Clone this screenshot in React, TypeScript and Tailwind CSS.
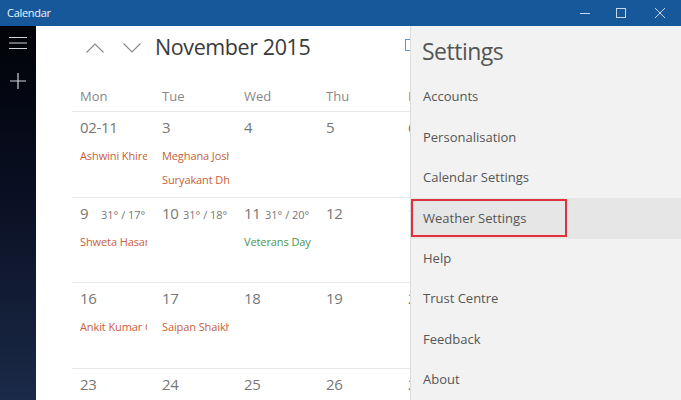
import React from "react";

const font = { fontFamily: '"Open Sans", "Noto Sans", sans-serif' };

type Ev = { t: string; c?: "o" | "g" };
type Cell = { d: string; w?: string; ev?: Ev[] };

const rows: Cell[][] = [
  [
    { d: "02-11", ev: [{ t: "Ashwini Khire-Kulkarni" }] },
    { d: "3", ev: [{ t: "Meghana Joshi" }, { t: "Suryakant Dhapte" }] },
    { d: "4" },
    { d: "5" },
    { d: "6" },
  ],
  [
    { d: "9", w: "31° / 17°", ev: [{ t: "Shweta Hasarmani" }] },
    { d: "10", w: "31° / 18°" },
    { d: "11", w: "31° / 20°", ev: [{ t: "Veterans Day", c: "g" }] },
    { d: "12" },
    { d: "13" },
  ],
  [
    { d: "16", ev: [{ t: "Ankit Kumar Gupta" }] },
    { d: "17", ev: [{ t: "Saipan Shaikh" }] },
    { d: "18" },
    { d: "19" },
    { d: "20" },
  ],
  [{ d: "23" }, { d: "24" }, { d: "25" }, { d: "26" }, { d: "27" }],
];

const settings = [
  "Accounts",
  "Personalisation",
  "Calendar Settings",
  "Weather Settings",
  "Help",
  "Trust Centre",
  "Feedback",
  "About",
];

export default function App() {
  return (
    <div className="w-[681px] h-[400px] overflow-hidden flex flex-col bg-white" style={font}>
      {/* Title bar */}
      <div className="h-[26px] shrink-0 bg-[#16589a] flex items-center text-white">
        <div className="pl-[7px] text-[11px] flex-1 tracking-[-0.3px] text-[#f2f6fa]">Calendar</div>
        <div className="flex items-center h-full">
          <div className="w-[36px] h-full flex items-center justify-center">
            <svg width="10" height="10" viewBox="0 0 10 10"><path d="M0 5.5h10" stroke="#c9d7e8" strokeWidth="1" /></svg>
          </div>
          <div className="w-[36px] h-full flex items-center justify-center">
            <svg width="10" height="10" viewBox="0 0 10 10"><rect x="0.5" y="0.5" width="9" height="9" fill="none" stroke="#c9d7e8" strokeWidth="1" /></svg>
          </div>
          <div className="w-[42px] h-full flex items-center justify-center">
            <svg width="10" height="10" viewBox="0 0 10 10"><path d="M0 0L10 10M10 0L0 10" stroke="#c9d7e8" strokeWidth="1" /></svg>
          </div>
        </div>
      </div>

      <div className="flex flex-1 min-h-0">
        {/* Sidebar */}
        <div className="w-[36px] shrink-0 bg-gradient-to-b from-[#020308] via-[#0b1226] to-[#1b2a48] flex flex-col items-center pt-[10px]">
          <svg width="18" height="14" viewBox="0 0 18 14">
            <path d="M0 1.5h18M0 7h18M0 12.5h18" stroke="#cfd3da" strokeWidth="1.2" />
          </svg>
          <svg className="mt-[23px]" width="16" height="16" viewBox="0 0 16 16">
            <path d="M8 0v16M0 8h16" stroke="#cfd3da" strokeWidth="1.2" />
          </svg>
        </div>

        {/* Main calendar */}
        <div className="w-[374px] shrink-0 overflow-hidden relative">
          <div className="h-[43px] flex items-center pl-[50px]">
            <svg width="18" height="10" viewBox="0 0 18 10">
              <path d="M0.5 9.5L9 1l8.5 8.5" fill="none" stroke="#888" strokeWidth="1.1" />
            </svg>
            <svg className="ml-[19px]" width="18" height="10" viewBox="0 0 18 10">
              <path d="M0.5 0.5L9 9l8.5-8.5" fill="none" stroke="#888" strokeWidth="1.1" />
            </svg>
            <div className="ml-[14px] text-[21.5px] text-[#3a3a3a] tracking-[-0.4px] whitespace-nowrap">November 2015</div>
            <div className="absolute left-[369px] top-[13px] w-[8px] h-[12px] border-l-[1.5px] border-t-[1.5px] border-b-[1.5px] border-[#5a94d0]" />
          </div>
          <div className="ml-[36px] w-[410px]">
            <div className="h-[42px] grid grid-cols-[82px_82px_82px_82px_82px] items-center text-[13px] text-[#888] pt-[14px]">
              {["Mon", "Tue", "Wed", "Thu", "Fri"].map((d) => (
                <div key={d} className="pl-[8px]">{d}</div>
              ))}
            </div>
            {rows.map((r, i) => (
              <div key={i} className="h-[85.5px] border-t border-[#e8e8e8] grid grid-cols-[82px_82px_82px_82px_82px]">
                {r.map((c, j) => (
                  <div key={j} className="pl-[8px] pr-[7px] pt-[4px] overflow-hidden">
                    <div className="flex items-baseline h-[24px] whitespace-nowrap">
                      <span className={`text-[15px] text-[#777] tracking-[-0.3px] ${c.w ? "w-[19px] shrink-0" : ""}`}>{c.d}</span>
                      {c.w && <span className="ml-[2px] text-[11px] text-[#777]">{c.w}</span>}
                    </div>
                    <div className="mt-[4px]">
                      {c.ev?.map((e, k) => (
                        <div
                          key={k}
                          className={`h-[24px] leading-[24px] text-[11px] whitespace-nowrap overflow-hidden tracking-[-0.1px] ${e.c === "g" ? "text-[#4c934c]" : "text-[#c8603a]"}`}
                        >
                          {e.t}
                        </div>
                      ))}
                    </div>
                  </div>
                ))}
              </div>
            ))}
          </div>
        </div>

        {/* Settings flyout */}
        <div className="flex-1 bg-[#f2f2f2] border-l border-[#dcdcdc]">
          <div className="h-[50px] pl-[11px] flex items-center text-[23px] text-[#555] tracking-[-0.5px]">Settings</div>
          <div className="pt-[1px]">
            {settings.map((s) => (
              <div
                key={s}
                className={`h-[40.4px] flex items-center text-[13px] text-[#555] ${s === "Weather Settings" ? "bg-[#e6e6e6]" : ""}`}
              >
                {s === "Weather Settings" ? (
                  <div className="h-[38px] w-[156px] border-2 border-[#e0303e] flex items-center pl-[10px]">{s}</div>
                ) : (
                  <div className="pl-[12px]">{s}</div>
                )}
              </div>
            ))}
          </div>
        </div>
      </div>
    </div>
  );
}
